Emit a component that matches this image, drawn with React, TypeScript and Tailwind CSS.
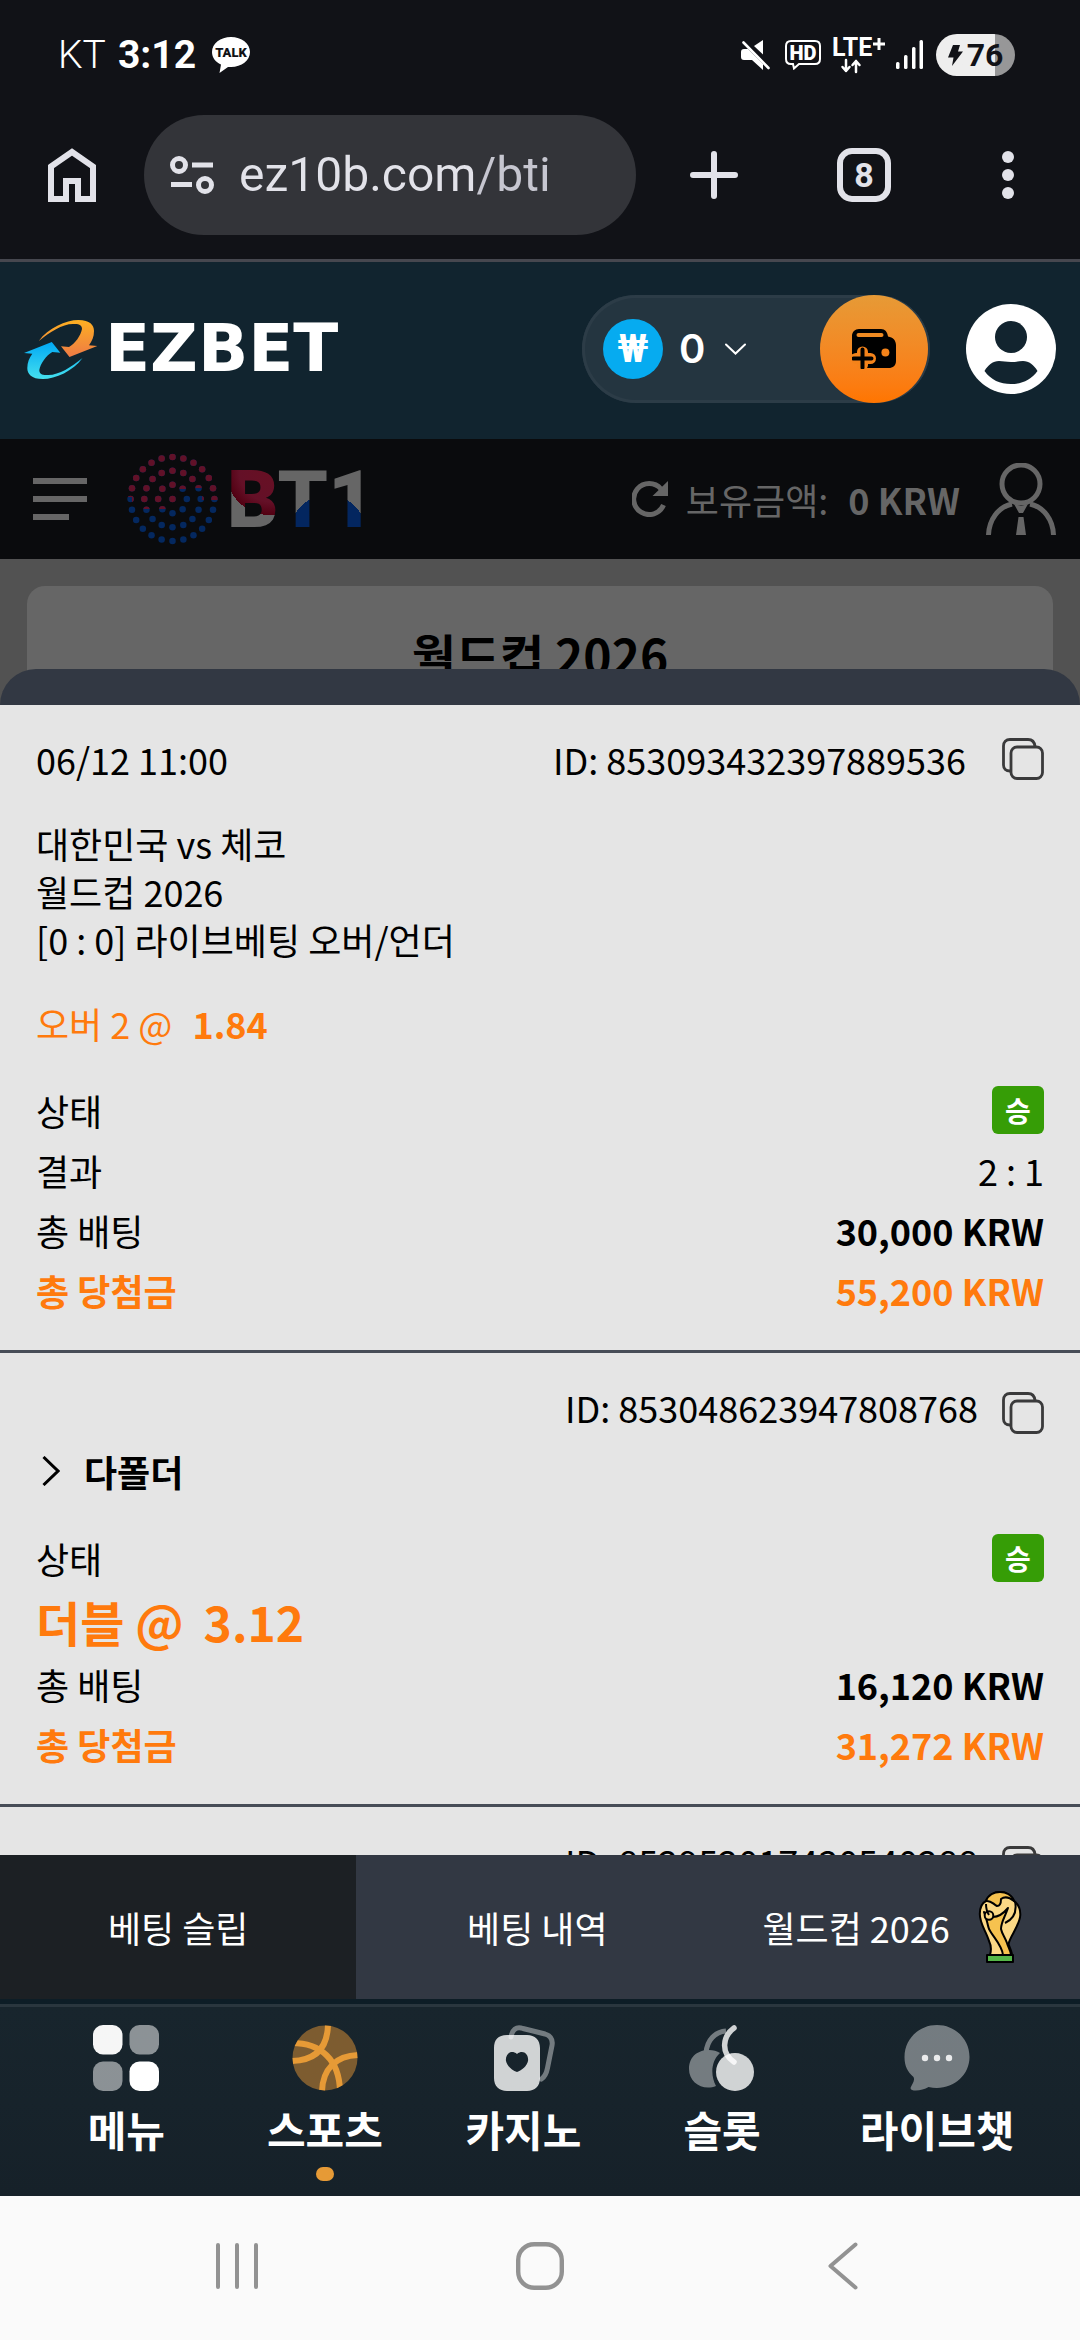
import React from 'react';

interface BetRow {
  label: string;
  value?: string;
  kind: 'badge' | 'text' | 'stake' | 'payout' | 'odds';
}

interface Bet {
  id: string;
  date?: string;
  lines?: string[];
  pick?: { label: string; odds: string };
  folder?: string;
  rows: BetRow[];
}

const BETS: Bet[] = [
  {
    id: '853093432397889536',
    date: '06/12 11:00',
    lines: ['대한민국 vs 체코', '월드컵 2026', '[0 : 0] 라이브베팅 오버/언더'],
    pick: { label: '오버 2 @', odds: '1.84' },
    rows: [
      { label: '상태', value: '승', kind: 'badge' },
      { label: '결과', value: '2 : 1', kind: 'text' },
      { label: '총 배팅', value: '30,000 KRW', kind: 'stake' },
      { label: '총 당첨금', value: '55,200 KRW', kind: 'payout' },
    ],
  },
  {
    id: '853048623947808768',
    folder: '다폴더',
    rows: [
      { label: '상태', value: '승', kind: 'badge' },
      { label: '더블 @', value: '3.12', kind: 'odds' },
      { label: '총 배팅', value: '16,120 KRW', kind: 'stake' },
      { label: '총 당첨금', value: '31,272 KRW', kind: 'payout' },
    ],
  },
  {
    id: '852952017430540288',
    rows: [],
  },
];

/* ---------- status bar ---------- */

const TalkIcon = () => (
  <svg className="h-9 w-[38px]" viewBox="0 0 38 36">
    <path d="M19 0C8.500 0 0 6.500 0 15c0 5.500 3.500 10 9 12.600L7.500 36l8.500-6h3c10.500 0 19-6.500 19-15S29.500 0 19 0Z" fill="#fff" />
    <text x="19" y="20" textAnchor="middle" fontFamily="Roboto, sans-serif" fontSize="13" fontWeight="900" fill="#111217">TALK</text>
  </svg>
);

const MuteIcon = () => (
  <svg className="h-[30px] w-[30px]" viewBox="0 0 30 30" fill="#fff">
    <path d="M0 12c0-2 1-3 3-3h4l15 15v6L11 20H3c-2 0-3-1-3-3v-5Z" />
    <path d="M13 6l9-6v14.500L13 6Z" />
    <path d="M2.500 2.500l25 25.500" stroke="#fff" strokeWidth="2.600" strokeLinecap="round" />
  </svg>
);

const HdIcon = () => (
  <svg className="h-[30px] w-9" viewBox="0 0 36 30">
    <path d="M6 1h24c3 0 5 2 5 5v13c0 3-2 5-5 5H14l-5 4.500-1-4.500H6c-3 0-5-2-5-5V6c0-3 2-5 5-5Z" fill="none" stroke="#fff" strokeWidth="2" />
    <text x="18" y="20" textAnchor="middle" fontFamily="Roboto, sans-serif" fontSize="20" fontWeight="900" fill="#fff">HD</text>
  </svg>
);

const LteIcon = () => (
  <svg className="h-12 w-[54px]" viewBox="0 -6 54 48">
    <text x="0" y="19" fontFamily="Roboto, sans-serif" fontSize="25" fontWeight="700" fill="#fff">LTE</text>
    <path d="M47 1v12M41 7h12" stroke="#fff" strokeWidth="3" />
    <path d="M14 23v11M10.500 30l3.500 4 3.500-4M24 35V24M20.500 28l3.500-4 3.500 4" fill="none" stroke="#fff" strokeWidth="2.500" strokeLinecap="round" strokeLinejoin="round" />
  </svg>
);

const SignalIcon = () => (
  <svg className="h-[30px] w-7" viewBox="0 0 28 30" fill="#fff">
    <rect x="0" y="22" width="3.500" height="7" rx="1.500" />
    <rect x="8" y="15" width="3.500" height="14" rx="1.500" />
    <rect x="16" y="7" width="3.500" height="22" rx="1.500" />
    <rect x="23.500" y="0" width="3.500" height="29" rx="1.500" />
  </svg>
);

const StatusBar: React.FC = () => (
  <div className="flex h-[110px] shrink-0 items-center pr-[65px] pl-[58px] text-white">
    <span className="font-[Roboto,sans-serif] text-[39px] leading-[48px] font-light">KT</span>
    <span className="ml-3 font-[Roboto,sans-serif] text-[39px] leading-[48px] font-bold">3:12</span>
    <span className="ml-4"><TalkIcon /></span>
    <div className="ml-auto flex items-center">
      <MuteIcon />
      <span className="ml-[14px]"><HdIcon /></span>
      <span className="ml-[11px]"><LteIcon /></span>
      <span className="ml-[10px]"><SignalIcon /></span>
      <div className="ml-3 flex h-[42px] w-[79px] items-center justify-center rounded-full bg-linear-to-r from-[#eeeeee] from-75% to-[#979798] to-75% text-[#111217]">
        <svg className="h-[21px] w-[15px]" viewBox="0 0 15 21" fill="#111217">
          <path d="M5 0h7l-2 6.500h5L4 21l1.500-8.500H0L5 0Z" />
        </svg>
        <span className="ml-1 font-[Roboto,sans-serif] text-[32px] leading-[42px] font-bold">76</span>
      </div>
    </div>
  </div>
);

/* ---------- browser toolbar ---------- */

const BrowserBar: React.FC = () => (
  <div className="flex h-[152px] shrink-0 items-start border-b-[3px] border-[#46474f] pt-[5px] pr-[66px] pl-12 text-[#e2e2e9]">
    <button type="button" aria-label="Home" className="flex h-[120px] w-12 items-center">
      <svg className="h-[54px] w-12" viewBox="0 0 48 54">
        <path d="M3 18.500 24 4l21 14.500V51H30V33H18v18H3Z" fill="none" stroke="#e2e2e9" strokeWidth="6" />
      </svg>
    </button>
    <div className="ml-12 flex h-[120px] flex-1 items-center rounded-full bg-[#333439] pl-[25px]">
      <svg className="h-[38px] w-[46px] shrink-0" viewBox="0 0 46 38" fill="none" stroke="#e2e2e9" strokeWidth="5">
        <circle cx="10" cy="9" r="6.500" />
        <path d="M23 9h21M2 28.500h21" />
        <circle cx="36" cy="29" r="6.500" />
      </svg>
      <input
        type="text"
        aria-label="Address"
        defaultValue="ez10b.com/bti"
        className="ml-6 h-[60px] w-full min-w-0 bg-linear-to-r from-[#e2e2e9] from-[235px] to-[#c6c6d0] to-[236px] bg-clip-text font-[Roboto,sans-serif] text-[48px] leading-[60px] text-transparent outline-none"
      />
    </div>
    <button type="button" aria-label="New tab" className="ml-[54px] flex h-[120px] items-center">
      <svg className="h-12 w-12" viewBox="0 0 48 48">
        <path d="M24 3v42M3 24h42" stroke="#e2e2e9" strokeWidth="6" strokeLinecap="round" />
      </svg>
    </button>
    <button type="button" aria-label="Tabs" className="ml-[99px] flex h-[120px] items-center">
      <span className="flex size-[54px] items-center justify-center rounded-[15px] border-[6px] border-[#e2e2e9] font-[Roboto,sans-serif] text-[34px] leading-[42px] font-bold">8</span>
    </button>
    <button type="button" aria-label="More" className="ml-[111px] flex h-[120px] w-3 flex-col items-center justify-center gap-[6px]">
      <span className="size-3 rounded-full bg-[#e2e2e9]" />
      <span className="size-3 rounded-full bg-[#e2e2e9]" />
      <span className="size-3 rounded-full bg-[#e2e2e9]" />
    </button>
  </div>
);

/* ---------- site header ---------- */

const SWIRL =
  'M14.800 21C24 8 42 0 54.400 0C66 0 70 5 70 11C70 17 68 21 65 25.300L73.300 26L45.500 37L37 26.300L45 27C51 24 57 15 58 9C58 5 55 3.500 49 4C38 4 26 12 14.800 21Z';

const BrandMark = () => (
  <svg className="h-[59px] w-[74px]" viewBox="0 0 74 59">
    <defs>
      <linearGradient id="swirlWarm" x1="0" y1="0" x2="0" y2="1">
        <stop offset="0" stopColor="#fdb022" />
        <stop offset="1" stopColor="#ee7a45" />
      </linearGradient>
      <linearGradient id="swirlCool" x1="0" y1="1" x2="0" y2="0">
        <stop offset="0" stopColor="#00a8f5" />
        <stop offset="1" stopColor="#45e0ee" />
      </linearGradient>
    </defs>
    <path d={SWIRL} fill="url(#swirlWarm)" />
    <path d={SWIRL} fill="url(#swirlCool)" transform="rotate(180 36.650 29.500)" />
  </svg>
);

const WalletIcon = () => (
  <svg className="h-10 w-11" viewBox="0 0 44 40">
    <path d="M0 25V7c0-4 3-7 7-7h22c4 0 6.500 3 7 7.500 5 .8 8 4 8 8.500v16c0 4.500-3 7-7.500 7H15Z" />
    <rect x="4.500" y="4" width="27" height="4" rx="2" fill="#ee8a22" />
    <circle cx="33.400" cy="23.500" r="4" fill="#f4831a" />
    <path d="M10.500 23v13M4 29.500h14.500" stroke="#f4831a" strokeWidth="11" strokeLinecap="round" />
    <path d="M10.500 20.500v18M1.500 29.500h18" stroke="#000" strokeWidth="4" strokeLinecap="round" />
  </svg>
);

const AvatarIcon = () => (
  <svg className="size-[90px]" viewBox="0 0 90 90">
    <circle cx="45" cy="45" r="45" fill="#fff" />
    <circle cx="45" cy="33" r="16" fill="#12242f" />
    <path d="M18.500 67C22 61 27 57 33 57c4 0 7 1 12 1s8-1 12-1c6 0 11 4 14.500 10C65 76 56 80 45 80S25 76 18.500 67Z" fill="#12242f" />
  </svg>
);

const SiteHeader: React.FC = () => (
  <header className="flex h-[177px] shrink-0 items-center bg-[#11242f] px-6 pb-[3px]">
    <a href="#home" className="flex items-center gap-[7px] text-white">
      <BrandMark />
      <span className="font-['DejaVu_Sans',sans-serif] text-[66px] leading-[78px] font-bold">EZBET</span>
    </a>
    <div className="ml-auto flex h-[108px] w-[348px] items-center rounded-full bg-[#243540] pr-[2px] shadow-[inset_0_0_0_3px_#2c3c47]">
      <span className="ml-[21px] flex size-[60px] items-center justify-center rounded-full bg-[#06abf0] font-[Roboto,sans-serif] text-[38px] leading-[60px] font-bold text-white">₩</span>
      <button type="button" className="ml-4 flex items-center text-white">
        <span className="font-[Inter,sans-serif] text-[40px] leading-[48px] font-semibold">0</span>
        <svg className="ml-5 h-3 w-[21px]" viewBox="0 0 21 12">
          <path d="M1 1.500l9.500 9L20 1.500" fill="none" stroke="#fff" strokeWidth="2" strokeLinecap="round" />
        </svg>
      </button>
      <button type="button" aria-label="Deposit" className="ml-auto flex size-[108px] items-center justify-center rounded-full bg-linear-to-b from-[#e69a36] to-[#ff7500]">
        <WalletIcon />
      </button>
    </div>
    <button type="button" aria-label="Account" className="ml-9"><AvatarIcon /></button>
  </header>
);

/* ---------- sportsbook bar ---------- */

const RINGS = [
  { r: 0, n: 1 },
  { r: 14.5, n: 8 },
  { r: 28.5, n: 16 },
  { r: 42.4, n: 24 },
];

const DotGlobe = () => (
  <svg className="h-[92px] w-[91px]" viewBox="0 0 92 92">
    <defs>
      <clipPath id="globeTop"><path d="M0 0H92V47H76V35H60V36H52V50H40V56H15V50H5V44H0Z" /></clipPath>
    </defs>
    {['base', 'top'].map((layer) => (
      <g key={layer} fill={layer === 'base' ? '#04285f' : '#611128'} clipPath={layer === 'top' ? 'url(#globeTop)' : undefined}>
        {RINGS.flatMap(({ r, n }) =>
          Array.from({ length: n }, (_, i) => {
            const a = (i / n) * Math.PI * 2;
            return <circle key={`${r}-${i}`} cx={46 + r * Math.sin(a)} cy={46 - r * Math.cos(a)} r="3.300" />;
          }),
        )}
      </g>
    ))}
  </svg>
);

const BtiWordmark = () => (
  <svg className="h-[96px] w-[150px]" viewBox="-6 -18 150 96" fontFamily="Roboto, sans-serif" fontSize="80" fontWeight="900">
    <defs>
      <radialGradient id="btiRed" gradientUnits="userSpaceOnUse" cx="39" cy="2" r="44">
        <stop offset="0" stopColor="#681024" />
        <stop offset="0.700" stopColor="#641027" />
        <stop offset="1" stopColor="#520012" />
        <stop offset="1" stopColor="#666" />
      </radialGradient>
      <radialGradient id="btiBlue" gradientUnits="userSpaceOnUse" cx="97" cy="64" r="38">
        <stop offset="1" stopColor="#03265f" />
        <stop offset="1" stopColor="#666" />
      </radialGradient>
    </defs>
    <text x="-4" y="58" fill="url(#btiBlue)"><tspan fill="url(#btiRed)">B</tspan>T1</text>
  </svg>
);

const SportsbookBar: React.FC = () => (
  <div className="flex h-[120px] shrink-0 items-center bg-[#0a0b0d] pr-6 pl-[33px] text-[#666]">
    <button type="button" aria-label="Menu" className="flex flex-col gap-3">
      <span className="h-[6px] w-[54px] bg-[#666]" />
      <span className="h-[6px] w-[54px] bg-[#666]" />
      <span className="h-[6px] w-9 bg-[#666]" />
    </button>
    <a href="#bti" className="ml-10 flex items-center gap-[7px]">
      <DotGlobe />
      <BtiWordmark />
    </a>
    <button type="button" aria-label="Refresh" className="ml-auto">
      <svg className="size-9" viewBox="0 0 36 36">
        <path d="M31.500 24A15.500 15.500 0 1 1 29 8" fill="none" stroke="#666" strokeWidth="5" />
        <path d="M36 0v15H20.500Z" fill="#666" />
      </svg>
    </button>
    <span className="ml-[18px] text-4xl leading-[48px]">보유금액:</span>
    <span className="ml-5 text-4xl leading-[48px] font-bold">0 KRW</span>
    <button type="button" aria-label="My account" className="ml-[26px]">
      <svg className="h-[72px] w-[70px]" viewBox="0 0 70 72" fill="none" stroke="#666" strokeWidth="5">
        <circle cx="35" cy="21" r="19" />
        <path d="M2.500 72C3 57 12 44 26 41M67.500 72C67 57 58 44 44 41" />
        <path d="M28 41l5 9h4l5-9-7 2ZM32.500 54h5L40 72H30Z" fill="#666" stroke="none" />
      </svg>
    </button>
  </div>
);

/* ---------- bet history ---------- */

const CopyButton = () => (
  <button type="button" aria-label="Copy ID">
    <svg className="size-[42px]" viewBox="0 0 42 42" fill="none" stroke="#3a3a3b" strokeWidth="2.800">
      <path d="M8 33C4 33 1.500 31 1.500 27V8c0-4 2.500-6.500 6.500-6.500h18c4 0 6.500 2 7 7" />
      <rect x="9" y="9" width="31.500" height="31.500" rx="6" />
    </svg>
  </button>
);

const Row: React.FC<{ row: BetRow }> = ({ row }) => {
  if (row.kind === 'odds') {
    return (
      <div className="flex h-[66px] items-center gap-5 text-5xl leading-[66px] font-bold text-[#ff7a0d]">
        <dt>{row.label}</dt>
        <dd>{row.value}</dd>
      </div>
    );
  }
  return (
    <div className={`flex h-[60px] items-center justify-between ${row.kind === 'payout' ? 'font-bold text-[#ff7a0d]' : ''}`}>
      <dt>{row.label}</dt>
      {row.kind === 'badge' ? (
        <dd className="flex h-12 w-[52px] items-center justify-center rounded-md bg-[#369d06] text-[28px] leading-[48px] font-bold text-white">{row.value}</dd>
      ) : (
        <dd className={row.kind === 'text' ? '' : 'font-bold'}>{row.value}</dd>
      )}
    </div>
  );
};

const BetCard: React.FC<{ bet: Bet }> = ({ bet }) => (
  <li className="border-b-[3px] border-[#474d57] px-9 py-[30px]">
    <div className={`flex h-12 items-center ${bet.date ? 'gap-9' : 'gap-6'}`}>
      {bet.date && <time>{bet.date}</time>}
      <span className="ml-auto">ID: {bet.id}</span>
      <span className={`flex ${bet.date ? '' : 'pt-3'}`}><CopyButton /></span>
    </div>
    {bet.lines && (
      <div className="mt-9">
        {bet.lines.map((line) => <p key={line}>{line}</p>)}
      </div>
    )}
    {bet.pick && (
      <p className="mt-9 flex gap-5 text-[#ff7a0d]">
        <span>{bet.pick.label}</span>
        <b className="font-bold">{bet.pick.odds}</b>
      </p>
    )}
    {bet.folder && (
      <button type="button" className="mt-4 flex items-center font-bold">
        <svg className="ml-[6px] h-[30px] w-[18px]" viewBox="0 0 18 30">
          <path d="M1.500 1l14.500 14L1.500 29" fill="none" stroke="#000" strokeWidth="3" />
        </svg>
        <span className="ml-6">{bet.folder}</span>
      </button>
    )}
    <dl className="mt-[33px]">
      {bet.rows.map((row) => <Row key={row.label} row={row} />)}
    </dl>
  </li>
);

/* ---------- bottom tabs ---------- */

const TrophyIcon = () => (
  <svg className="size-[72px]" viewBox="-15 0 72 72" stroke="#000" strokeWidth="2" strokeLinejoin="round">
    <path d="M7 10C9 4 15 1 21 1s12 3 14 9c4 3 6.500 8 6.300 14C41 34 31 45 29.500 53c1 3 3.500 8 3.500 11H11c1.500-5 1-10-1-14C7 40 .8 33 .8 23 .8 17 3 12 7 10Z" fill="#fbd885" />
    <path d="M7 10C9 4 15 1 21 1s12 3 14 9c-5-4-9-5-13-2 0 4-1 7-4 7-4-2-6-6-11-5Z" fill="#f6c24f" />
    <path d="M5 21c3 7 3 11 5 17 4 8 13 16 14 26h8c0-4-3-8-4-12-2-6-5-9-6-14 0-7 4-12 7-21-5 6-11 9-15 9-3 0-6-2-9-5Z" fill="#f6c24f" />
    <circle cx="10" cy="24.500" r="4.300" fill="#fbd885" />
    <path d="M36 10c2 10-1 18-10 22M7 13c0 6 1 8 3 11" fill="none" />
    <rect x="8" y="64" width="26" height="7" fill="#55b748" />
  </svg>
);

const BetTabs: React.FC = () => (
  <div className="flex h-36 shrink-0 bg-[#323843] text-4xl leading-[48px] text-white">
    <button type="button" className="w-[33%] bg-[#1c2024]">베팅 슬립</button>
    <button type="button" className="flex-1">베팅 내역</button>
    <button type="button" className="flex flex-1 items-center justify-center gap-[14px]">
      월드컵 2026
      <TrophyIcon />
    </button>
  </div>
);

/* ---------- site navigation ---------- */

const MenuIcon = () => (
  <svg className="size-[66px]" viewBox="0 0 66 66" fill="#fff">
    <rect x="0" y="0" width="29.500" height="29.500" rx="10" fillOpacity="0.960" />
    <rect x="36.500" y="0" width="29.500" height="29.500" rx="10" fillOpacity="0.500" />
    <rect x="0" y="36.500" width="29.500" height="29.500" rx="10" fillOpacity="0.500" />
    <rect x="36.500" y="36.500" width="29.500" height="29.500" rx="10" />
  </svg>
);

const SportsIcon = () => (
  <svg className="size-[66px]" viewBox="0 0 66 66">
    <defs><clipPath id="ball"><circle cx="33" cy="33" r="32.500" /></clipPath></defs>
    <circle cx="33" cy="33" r="32.500" fill="#7d5c30" />
    <g clipPath="url(#ball)" fill="none" stroke="#e69a36" strokeWidth="6">
      <path d="M36 -2C36 18 28 36 -2 36" />
      <path d="M0 18C28 18 48 34 48 68" />
      <path d="M68 30C44 30 30 44 30 68" />
    </g>
  </svg>
);

const CasinoIcon = () => (
  <svg className="size-[66px]" viewBox="0 0 66 66">
    <path d="M21 12C22 5 26 1 33 3.500l22 5.500c6 2 8 6 7 11.500L57.500 43c-1 5-3 9-6 11" fill="none" stroke="#fff" strokeOpacity="0.400" strokeWidth="5" strokeLinecap="round" />
    <path fillRule="evenodd" d="M17 10h20c8 0 13 5 13 13v30c0 8-5 13-13 13H17C9 66 4 61 4 53V23c0-8 4-13 13-13Zm10 19c-6-5-12 0-11 7 1 5 6 9 11 11 5-2 10-6 11-11 1-7-5-12-11-7Z" fill="#fff" fillOpacity="0.800" />
  </svg>
);

const SlotIcon = () => (
  <svg className="size-[66px]" viewBox="0 0 66 66">
    <g fill="#fff" stroke="#fff" opacity="0.400">
      <path d="M17 28C18 15 26 7 37 6" fill="none" strokeWidth="5" />
      <path d="M31 28C22 22 0 24 0 44c0 14 14 22 27 17-5-9-6-24 4-33Z" stroke="none" />
    </g>
    <circle cx="46" cy="47" r="19" fill="#fff" fillOpacity="0.800" />
    <path d="M45 3C33 12 32 28 45 37" fill="none" stroke="#fff" strokeOpacity="0.800" strokeWidth="5.500" strokeLinecap="round" />
  </svg>
);

const ChatIcon = () => (
  <svg className="size-[66px]" viewBox="0 0 66 66">
    <path d="M33 0C15 0 .5 14 .5 32c0 9 3 15 9 20 2 4-2 8-3 11 0 4 12 3 18-1C46 67 65.500 52 65.500 32 65.500 14 51 0 33 0Z" fill="#fff" fillOpacity="0.400" />
    <g fill="#fff" fillOpacity="0.850">
      <circle cx="21" cy="33" r="3.200" />
      <circle cx="33" cy="33" r="3.200" />
      <circle cx="45" cy="33" r="3.200" />
    </g>
  </svg>
);

const NAV = [
  { label: '메뉴', icon: MenuIcon, grow: 'flex-[6]' },
  { label: '스포츠', icon: SportsIcon, grow: 'flex-[6]', active: true },
  { label: '카지노', icon: CasinoIcon, grow: 'flex-[6]' },
  { label: '슬롯', icon: SlotIcon, grow: 'flex-[6]' },
  { label: '라이브챗', icon: ChatIcon, grow: 'flex-[7]' },
];

const SiteNav: React.FC = () => (
  <div className="shrink-0 bg-[#0d1d26] pt-[5px]">
    <nav className="flex h-48 border-t-[3px] border-[#2a363e] bg-linear-to-b from-[#18252d] to-[#162129] px-[27px]">
      {NAV.map(({ label, icon: Icon, grow, active }) => (
        <a key={label} href={`#${label}`} className={`flex flex-col items-center pt-[18px] text-white ${grow}`}>
          <Icon />
          <span className="mt-2 text-[42px] leading-[60px] font-bold">{label}</span>
          {active && <span className="mt-2 h-[14px] w-[18px] rounded-full bg-[#e69a36]" />}
        </a>
      ))}
    </nav>
  </div>
);

/* ---------- system buttons ---------- */

const SystemBar: React.FC = () => (
  <div className="flex h-36 shrink-0 items-center justify-between bg-[#fafafa] pr-[222px] pb-1 pl-[216px]">
    <button type="button" aria-label="Recents">
      <svg className="h-12 w-[42px]" viewBox="0 0 42 48" stroke="#929292" strokeWidth="4" strokeLinecap="round">
        <path d="M2 3v42M21 3v42M40 3v42" />
      </svg>
    </button>
    <button type="button" aria-label="Home screen">
      <svg className="size-12" viewBox="0 0 48 48">
        <rect x="2.200" y="2.200" width="43.600" height="43.600" rx="16" fill="none" stroke="#929292" strokeWidth="4.400" />
      </svg>
    </button>
    <button type="button" aria-label="Back">
      <svg className="h-12 w-9" viewBox="0 0 36 48">
        <path d="M33.500 2.500 8.500 24l25 21.500" fill="none" stroke="#929292" strokeWidth="4" strokeLinecap="round" strokeLinejoin="round" />
      </svg>
    </button>
  </div>
);

export default function App() {
  return (
    <div className="flex h-screen flex-col overflow-hidden bg-[#111217] font-['Noto_Sans_CJK_KR',sans-serif]">
      <StatusBar />
      <BrowserBar />
      <SiteHeader />
      <SportsbookBar />
      <main className="flex min-h-0 flex-1 flex-col bg-[#525252]">
        <section className="h-[146px] shrink-0 overflow-hidden px-[27px] pt-[27px]">
          <div className="h-full rounded-t-[18px] bg-[#666] pt-8 text-center">
            <h1 className="text-5xl leading-[72px] font-bold">월드컵 2026</h1>
          </div>
        </section>
        {/* bet history sheet slides over the event list */}
        <section className="relative -mt-9 flex min-h-0 flex-1 flex-col rounded-t-[36px] bg-[#323843] pt-9">
          <ul className="min-h-0 flex-1 overflow-y-auto bg-[#e5e5e5] text-4xl leading-[48px] text-black [scrollbar-width:none]">
            {BETS.map((bet) => <BetCard key={bet.id} bet={bet} />)}
          </ul>
        </section>
      </main>
      <BetTabs />
      <SiteNav />
      <SystemBar />
    </div>
  );
}
